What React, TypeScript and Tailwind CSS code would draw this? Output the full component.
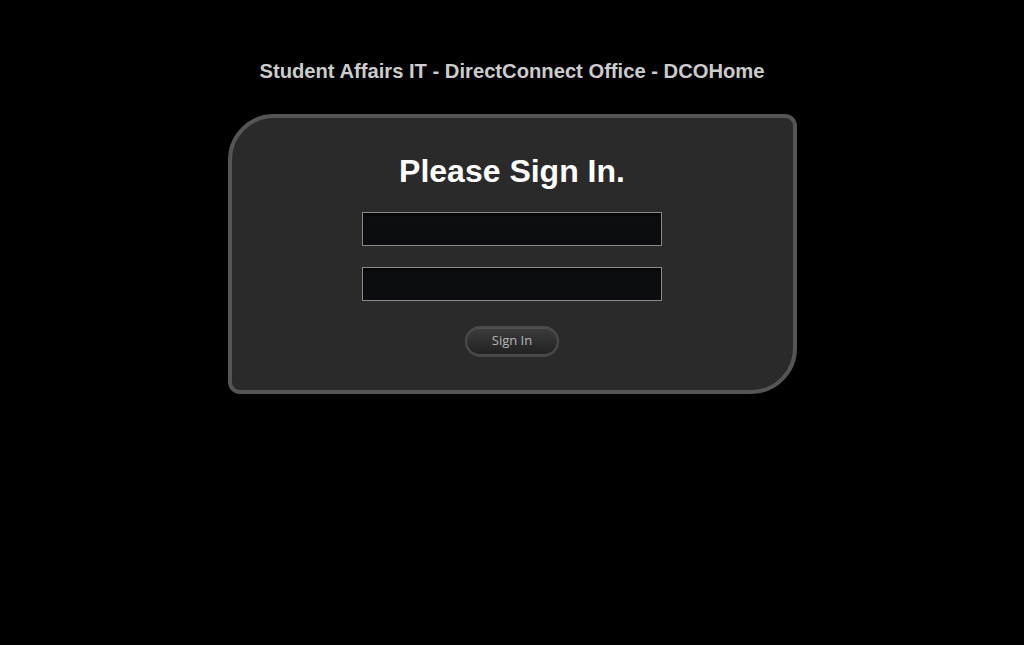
export default function App() {
  return (
    <div className="min-h-[645px] w-full bg-black flex flex-col items-center font-['Liberation_Sans',Arial,sans-serif]">
      <h2 className="mt-[58px] text-[20.2px] leading-[26px] font-bold text-[#cccccc]">
        Student Affairs IT - DirectConnect Office - DCOHome
      </h2>

      {/* sign-in card */}
      <div className="mt-[30px] w-[569px] h-[280px] bg-[#2a2a2a] border-4 border-[#555555] rounded-tl-[46px] rounded-br-[46px] rounded-tr-[12px] rounded-bl-[12px] flex flex-col items-center">
        <h1 className="mt-[33px] text-[32px] leading-[40px] font-bold text-white">Please Sign In.</h1>
        <input
          type="text"
          className="mt-[21px] w-[300px] h-[34px] bg-[#0c0d10] border border-[#8a8a8a] outline-none shadow-[inset_0_2px_3px_rgba(0,0,0,0.8)] text-[#ccc] px-2"
        />
        <input
          type="password"
          className="mt-[21px] w-[300px] h-[34px] bg-[#0c0d10] border border-[#8a8a8a] outline-none shadow-[inset_0_2px_3px_rgba(0,0,0,0.8)] text-[#ccc] px-2"
        />
        <button className="mt-[25px] w-[94px] h-[30px] rounded-full border-2 border-[#4a4a4a] bg-gradient-to-b from-[#3c3c3c] to-[#222222] shadow-[0_1px_1px_rgba(255,255,255,0.15),inset_0_1px_0_rgba(255,255,255,0.12)] text-[13px] text-[#b5b5b5] font-['Open_Sans',Arial,sans-serif]">
          Sign In
        </button>
      </div>
    </div>
  );
}
